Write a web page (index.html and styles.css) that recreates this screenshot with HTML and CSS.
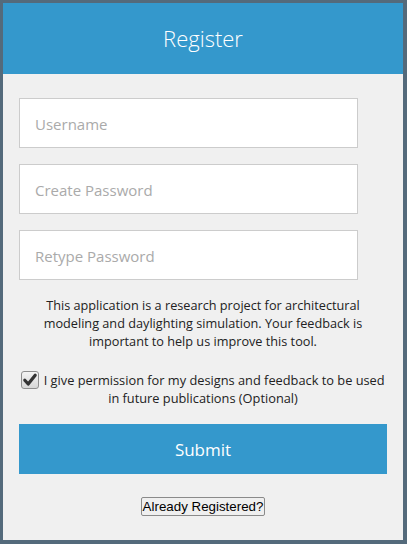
FILE: index.html
```html
<!DOCTYPE html>
<html lang="en">
<head>
<meta charset="utf-8">
<title>Register</title>
<link rel="stylesheet" href="styles.css">
</head>
<body>
<div class="card">
  <header class="header">Register</header>
  <form class="form">
    <input class="field" type="text" placeholder="Username">
    <input class="field" type="password" placeholder="Create Password">
    <input class="field" type="password" placeholder="Retype Password">
    <p class="note">This application is a research project for architectural modeling and daylighting simulation. Your feedback is important to help us improve this tool.</p>
    <label class="consent"><span class="check"><svg width="16" height="16" viewBox="0 0 16 16"><path d="M2.8 8.2 L6.2 12 L13.2 3.2" fill="none" stroke="#333" stroke-width="3.2" stroke-linecap="round" stroke-linejoin="round"/></svg></span> I give permission for my designs and feedback to be used in future publications (Optional)</label>
    <button class="submit" type="button">Submit</button>
    <div class="already-row"><button class="already" type="button">Already Registered?</button></div>
  </form>
</div>
</body>
</html>
```
FILE: styles.css
```css
html, body {
  margin: 0;
  padding: 0;
  background: #546a7b;
}
.card {
  margin: 3px 4px 4px 3px;
  height: 537px;
  background: #f0f0f0;
  font-family: "Open Sans", "Noto Sans", sans-serif;
}
.header {
  height: 71px;
  background: #3498cc;
  color: #fff;
  font-size: 22px;
  font-weight: 300;
  display: flex;
  align-items: center;
  justify-content: center;
  padding-bottom: 1px;
  box-sizing: border-box;
}
.form {
  padding: 24px 16px 0;
  display: flex;
  flex-direction: column;
}
.field {
  width: 92%;
  height: 50px;
  box-sizing: border-box;
  border: 1px solid #cccccc;
  background: #fff;
  padding: 2px 15px 0;
  margin: 0 0 16px 0;
  font-family: "Open Sans", "Noto Sans", sans-serif;
  font-size: 15px;
  color: #333;
  outline: none;
}
.field::placeholder {
  color: #aaaaaa;
}
.note {
  margin: 0;
  font-size: 12.7px;
  line-height: 18px;
  color: #222;
  text-align: center;
}
.consent {
  margin-top: 21px;
  font-size: 12.8px;
  line-height: 18px;
  color: #222;
  text-align: center;
}
.check {
  display: inline-block;
  width: 18px;
  height: 18px;
  box-sizing: border-box;
  border: 1px solid #8e8e8e;
  border-radius: 3px;
  background: linear-gradient(#f4f4f4, #d6d6d6);
  vertical-align: -4px;
  margin-right: 1px;
}
.check svg {
  display: block;
  margin: 0;
}
.submit {
  margin-top: 17px;
  height: 50px;
  border: none;
  background: #3498cc;
  color: #fff;
  font-family: "Open Sans", "Noto Sans", sans-serif;
  font-size: 17px;
}
.already-row {
  display: flex;
  justify-content: center;
  margin-top: 23px;
}
.already {
  font-family: "Liberation Sans", Arial, sans-serif;
  font-size: 13.33px;
  padding: 1px 1px;
  border: 1px solid #8a8a8a;
  border-radius: 2px;
  background: #efefef;
  color: #000;
}
```
